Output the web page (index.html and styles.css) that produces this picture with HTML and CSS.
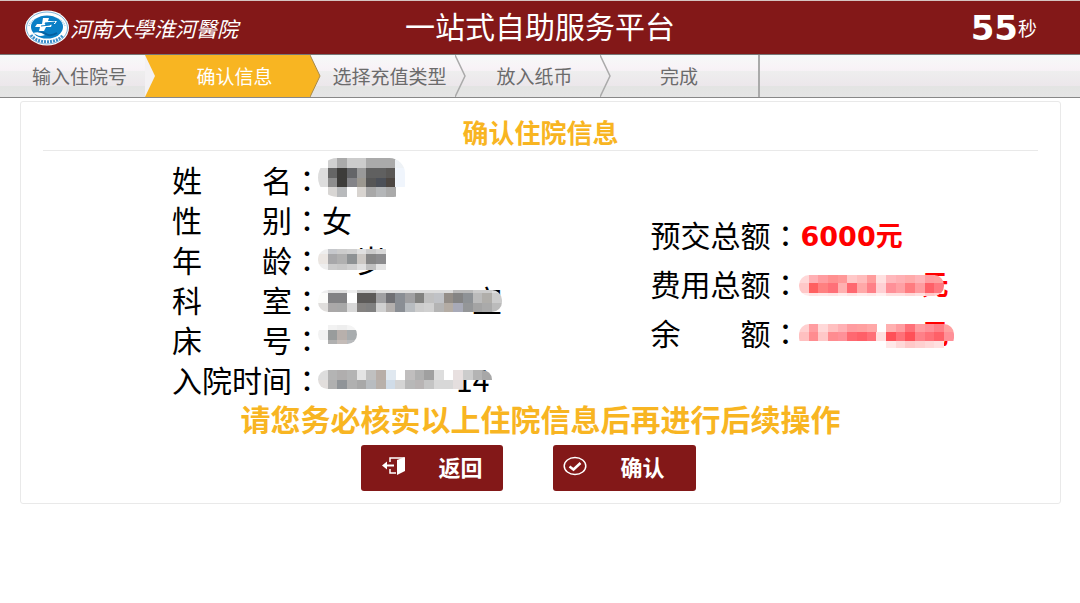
FILE: index.html
```
<!DOCTYPE html>
<html lang="zh-CN">
<head>
    <meta charset="UTF-8">
    <meta name="viewport" content="width=device-width, initial-scale=1.0">
    <title>一站式自助服务平台</title>
    <link rel="stylesheet" href="styles.css">
</head>
<body>
    <header class="header">
        <div class="logo">
            <svg class="logo-icon" viewBox="0 0 46 36" aria-hidden="true">
                <ellipse cx="23" cy="18" rx="22" ry="17.5" fill="#fff"/>
                <ellipse cx="23" cy="18" rx="20.5" ry="16" fill="none" stroke="#7fb6dc" stroke-width="1"/>
                <path d="M5 16C8 4 38 4 41 16" fill="none" stroke="#9cc8e6" stroke-width="1.5" stroke-dasharray="1 1"/>
                <path d="M7 25C13 34 33 34 39 25" fill="none" stroke="#3d8fca" stroke-width="3" stroke-dasharray="2 1"/>
                <ellipse cx="23" cy="17" rx="16" ry="11.5" fill="#0a7fc6"/>
                <path d="M19 8h6l-1 3h9l-2 3h-3l-1 3h-5l-2 4h-5l1-4h-5l2-3h5z" fill="#fff"/>
                <path d="M21 13l10-1-2 2-7 1zM17 16l9-1" fill="#0a7fc6" stroke="#0a7fc6"/>
                <path d="M12 24q6-3 10 0t11-1" fill="none" stroke="#0560a0" stroke-width="2"/>
                <path d="M9 23q7-2 12 2-5 2-8 0z" fill="#fff"/>
            </svg>
            <span class="logo-name">河南大學淮河醫院</span>
        </div>
        <h1 class="title">一站式自助服务平台</h1>
        <div class="timer"><strong>55</strong><span>秒</span></div>
    </header>

    <ol class="steps">
        <li class="step">输入住院号</li>
        <li class="step active">确认信息
            <svg class="notch" viewBox="0 0 11 42" aria-hidden="true"><path d="M0 0L10 21L0 42" fill="#f3f1f3"/></svg>
            <svg class="arrow" viewBox="0 0 11 42" aria-hidden="true"><path d="M0 0L10 21L0 42" fill="#f8b522" stroke="#a88a4a"/></svg>
        </li>
        <li class="step">选择充值类型
            <svg class="arrow" viewBox="0 0 11 42" aria-hidden="true"><path d="M0 0L10 21L0 42" fill="none" stroke="#aaa" stroke-width="1.5"/></svg>
        </li>
        <li class="step">放入纸币
            <svg class="arrow" viewBox="0 0 11 42" aria-hidden="true"><path d="M0 0L10 21L0 42" fill="none" stroke="#aaa" stroke-width="1.5"/></svg>
        </li>
        <li class="step last">完成</li>
    </ol>

    <main class="panel">
        <h2 class="panel-title">确认住院信息</h2>
        <div class="info">
            <dl class="list person">
                <div class="row"><dt><span>姓 名</span><i>：</i></dt><dd><svg class="mask mask-name" data-mask="name"></svg></dd></div>
                <div class="row"><dt><span>性 别</span><i>：</i></dt><dd>女</dd></div>
                <div class="row"><dt><span>年 龄</span><i>：</i></dt><dd class="age">岁<svg class="mask mask-age" data-mask="age"></svg></dd></div>
                <div class="row"><dt><span>科 室</span><i>：</i></dt><dd class="dept">室<svg class="mask mask-dept" data-mask="dept"></svg></dd></div>
                <div class="row"><dt><span>床 号</span><i>：</i></dt><dd><svg class="mask mask-bed" data-mask="bed"></svg></dd></div>
                <div class="row"><dt><span>入院时间</span><i>：</i></dt><dd class="date">14<svg class="mask mask-date" data-mask="date"></svg></dd></div>
            </dl>
            <dl class="list money">
                <div class="row"><dt><span>预交总额</span><i>：</i></dt><dd>6000元</dd></div>
                <div class="row"><dt><span>费用总额</span><i>：</i></dt><dd class="hidden-sum">元<svg class="mask mask-cost" data-mask="cost"></svg></dd></div>
                <div class="row"><dt><span>余 额</span><i>：</i></dt><dd class="hidden-sum">元<svg class="mask mask-balance" data-mask="balance"></svg></dd></div>
            </dl>
        </div>
        <p class="notice">请您务必核实以上住院信息后再进行后续操作</p>
        <div class="buttons">
            <button type="button" class="btn back-btn">
                <svg viewBox="0 0 24 20" aria-hidden="true">
                    <path d="M8 6V2h14M8 13v4h6" fill="none" stroke="#fff" stroke-width="1.5"/>
                    <path d="M15 4l8-3v14l-8 4z" fill="#fff"/>
                    <path d="M0 9.500l5-4v3h7v2H5v3z" fill="#fff"/>
                </svg>
                返回
            </button>
            <button type="button" class="btn ok-btn">
                <svg viewBox="0 0 24 20" aria-hidden="true">
                    <ellipse cx="12" cy="10" rx="10.800" ry="8.500" fill="none" stroke="#fff" stroke-width="1.500"/>
                    <path d="M6.500 10.500l4 3 7-6.500" fill="none" stroke="#fff" stroke-width="2.500"/>
                </svg>
                确认
            </button>
        </div>
    </main>

    <script src="script.js"></script>
</body>
</html>
```
FILE: styles.css
```
* {
    box-sizing: border-box;
}
body {
    margin: 0;
    background: #fff;
    color: #000;
    font-family: "Noto Sans CJK SC", sans-serif;
}
h1, h2, p, dl, dd, ol {
    margin: 0;
    padding: 0;
}

/* header */
.header {
    display: grid;
    grid-template-columns: 1fr auto 1fr;
    align-items: center;
    height: 54px;
    padding: 0 24px;
    border-top: 1px solid #d5c4c1;
    background: #831818;
    color: #fff;
}
.logo {
    display: flex;
    align-items: center;
}
.logo-icon {
    width: 46px;
    height: 36px;
}
.logo-name {
    font-size: 21px;
    font-style: italic;
    line-height: 28px;
    white-space: nowrap;
}
.title {
    padding-bottom: 6px;
    font-size: 30px;
    font-weight: normal;
    line-height: 44px;
}
.timer {
    display: flex;
    align-items: center;
    justify-content: flex-end;
    padding-right: 19px;
}
.timer strong {
    font-family: "DejaVu Sans", sans-serif;
    font-size: 34px;
    line-height: 40px;
}
.timer span {
    font-size: 19px;
}

/* steps */
.steps {
    display: grid;
    grid-template-columns: 145fr 165fr 145fr 145fr 160fr 320fr;
    height: 44px;
    border-top: 1px solid #777;
    border-bottom: 1px solid #888;
    background: linear-gradient(#f6f9f8 0, #f8f3f7 30%, #f6f1f5 38%, #eee 39%, #ece7eb 74%, #e3e4e3 75%, #e5e5e5 100%);
    list-style: none;
}
.step {
    position: relative;
    padding-left: 14px;
    color: #6b6b6b;
    font-size: 19px;
    line-height: 42px;
    text-align: center;
    white-space: nowrap;
}
.step.active {
    background: #f8b522;
    color: #fff;
}
.step.last {
    padding-left: 0;
    border-right: 2px solid #aaa;
}
.arrow, .notch {
    position: absolute;
    top: 0;
    width: 11px;
    height: 42px;
    z-index: 1;
}
.arrow {
    left: 100%;
}
.notch {
    left: 0;
}

/* panel */
.panel {
    margin: 3px 19px 0 20px;
    padding-bottom: 12px;
    border: 1px solid #e9e9e9;
    border-radius: 3px;
}
.panel-title {
    margin: 0 22px;
    padding-top: 12px;
    border-bottom: 1px solid #e9e9e9;
    color: #f8b522;
    font-size: 26px;
    line-height: 36px;
    text-align: center;
}
.info {
    display: grid;
    grid-template-columns: 478fr 409fr;
    padding: 8px 0 0 151px;
}
.list {
    font-size: 30px;
    line-height: 40px;
}
.row {
    display: flex;
}
.row dt {
    display: flex;
}
.row dt span {
    width: 120px;
    text-align-last: justify;
}
.row dt i {
    width: 30px;
    font-family: "Noto Sans CJK TC", sans-serif;
    font-style: normal;
}
.row dd {
    position: relative;
    white-space: nowrap;
}
.money {
    display: flex;
    flex-direction: column;
    gap: 3px;
    padding-top: 55px;
}
.money dd {
    color: #f00;
    font-family: "DejaVu Sans", "Noto Sans CJK SC", sans-serif;
    font-size: 27px;
    font-weight: bold;
    line-height: 46px;
}
.row .age {
    padding-left: 34px;
}
.row .dept {
    padding-left: 150px;
}
.row .date {
    padding-left: 134px;
}
.row .hidden-sum {
    padding-left: 121px;
}

/* mosaic over the private values */
.mask {
    position: absolute;
    left: -4px;
    border-radius: 10px;
}
.mask-name {
    top: -1px;
    border-radius: 20px 16px 12px 20px;
}
.mask-age {
    top: 10px;
    border-radius: 10px 0 0 10px;
}
.mask-dept {
    top: 11px;
}
.mask-bed {
    top: 6px;
}
.mask-date {
    top: 11px;
}
.mask-cost, .mask-balance {
    left: -2px;
    top: 12px;
}

/* notice and buttons */
.notice {
    padding-bottom: 6px;
    color: #f8b522;
    font-size: 30px;
    font-weight: bold;
    line-height: 38px;
    text-align: center;
}
.buttons {
    display: flex;
    justify-content: center;
    gap: 50px;
    padding: 2px 24px 0 0;
}
.btn {
    display: flex;
    align-items: center;
    height: 46px;
    border: 0;
    border-radius: 3px;
    background: #831818;
    color: #fff;
    font-family: inherit;
    font-size: 22px;
    font-weight: bold;
    cursor: pointer;
}
.btn svg {
    width: 24px;
    height: 20px;
}
.back-btn {
    gap: 32px;
    padding: 0 20px 4px 21px;
}
.ok-btn {
    gap: 34px;
    padding: 0 31px 4px 10px;
}
.btn:hover {
    background: #9a2020;
}
```
FILE: script.js
```
// each mask: row heights in px and one colour per cell, "-" leaves the cell empty
const CELL = 29 / 3;
const masks = {
    name: {
        heights: [10, 10, 9, 10],
        rows: [
            '- d0d0d0 aaa ccc ccc aaa aaa aaa eef2f6',
            'ddd 666 3d3c3a 646568 999 606060 606060 5a5856 f0f5fc',
            'ddd 8e8e8e 3d3c3a 848488 9c9890 565656 4c5058 4c4642 f0f5fc',
            '- d8d6d4 b8babc fff d8d4d0 a8a8a8 b4b6b8 aaa -'
        ]
    },
    age: {
        heights: [5, 10, 6],
        rows: [
            'eee c6c8cc ccc d0d0d0 e0e0e0 ccc d8d8d8',
            'ebe6e2 a8a8aa b0b0b0 8e9294 ccc8c4 868686 8c8c8e',
            'eee ccc c8c8c8 d0d0d0 e0e0e0 c0c0c0 e4e4e4'
        ]
    },
    dept: {
        heights: [3, 10, 9],
        rows: [
            'eee ddd ddd eee ccc ccc ddd ddd ddd ddd ddd ddd ddd ddd bbb bbb ccc ccc ddd',
            'fcfcfa 828284 828284 fff 5c5a58 5c5a58 a0a0a2 707074 8a8e94 a0a0a2 828280 c0c0c0 c0c2c6 948e88 848484 8e9296 bbb b0aeaa ccc',
            'e0dedc aaa8a8 a8a8a8 d8d8d8 848280 808080 d0d0d0 b4b0ae 8a8e94 b8bcc0 ccc d0d0d0 b4b4b4 b4aca4 a8aab8 949698 a4a4a4 aaa bbb'
        ]
    },
    bed: {
        heights: [5, 10, 4],
        rows: [
            '- f2f2f2 eee f4f4f4',
            'f2f2f2 999c9c b8b0ac a8acae',
            '- b0b0b0 c4bcb8 b8babc'
        ]
    },
    date: {
        heights: [10, 9],
        rows: [
            'ddd b4b4b4 b0aeae b4b4b4 e4e4e4 c0c0c0 b8aea8 e0e8f0 - c0bebe b0b0b0 a0a0a0 ddd - e8e0e0 ccc b4b4b4 a8a8a8',
            'e2dedc b0b0b0 909498 b0b0b0 a8a8a8 b8bcc0 b8b0aa d0dce8 d4d4d4 b8b8b8 b8b4b4 c4c4c4 d8d8d8 d8d8d8 e4dede - - -'
        ]
    },
    cost: {
        heights: [8, 10, 3],
        rows: [
            'ffd8d8 ffb0b4 ff9ca0 ff9090 ff9898 ffc8c8 ffbcbc ff9c9c ffe0e0 ffb8bc ffb0b4 ffaaaa ffb4b8 ff9ca0 ffa0a0',
            'ffc8c8 ff6060 ff8080 ff7078 ffb0b0 ff6870 ffa8a8 ff8088 ffd0d4 ff9098 ffa0a4 ff7c80 ff9ca0 ff6068 ff7880',
            'ffecec ffe4e4 ffe8e8 ffe4e4 ffecec ffe4e4 ffecec ffe8e8 fff0f0 ffe0e0 ffe0e0 ffd8d8 ffe0e0 ffc8c8 ffd0d0'
        ]
    },
    balance: {
        heights: [8, 9, 7],
        rows: [
            'ffd0d0 ff9ca0 ffd8d8 ffc0c0 ffb0b4 ff9ca0 ffa0a0 ffa8a8 - ffb0b0 ff9ca0 ff7078 ff9ca0 ff9098 ff8088 ffa0a0',
            'ffc0c0 ff8c90 ffc8c8 ff8c90 ff9098 ff6870 ff6068 ff7078 ffe0e0 ff5058 ff7078 ff5058 ff8088 ff7078 ff6068 ff9098',
            '- - - - - - - - - ffe8e8 ffd8d8 ffc8c8 ffd0d0 ffd8d8 ffe0e0 -'
        ]
    }
};

document.querySelectorAll('[data-mask]').forEach(svg => {
    const mask = masks[svg.dataset.mask];
    const columns = Math.max(...mask.rows.map(row => row.split(' ').length));
    let y = 0;
    mask.rows.forEach((row, r) => {
        row.split(' ').forEach((color, c) => {
            if (color === '-') return;
            const rect = document.createElementNS('http://www.w3.org/2000/svg', 'rect');
            rect.setAttribute('x', Math.round(c * CELL));
            rect.setAttribute('y', y);
            rect.setAttribute('width', 10);
            rect.setAttribute('height', mask.heights[r]);
            rect.setAttribute('fill', '#' + color);
            svg.appendChild(rect);
        });
        y += mask.heights[r];
    });
    svg.setAttribute('width', Math.round(columns * CELL));
    svg.setAttribute('height', y);
});
```
